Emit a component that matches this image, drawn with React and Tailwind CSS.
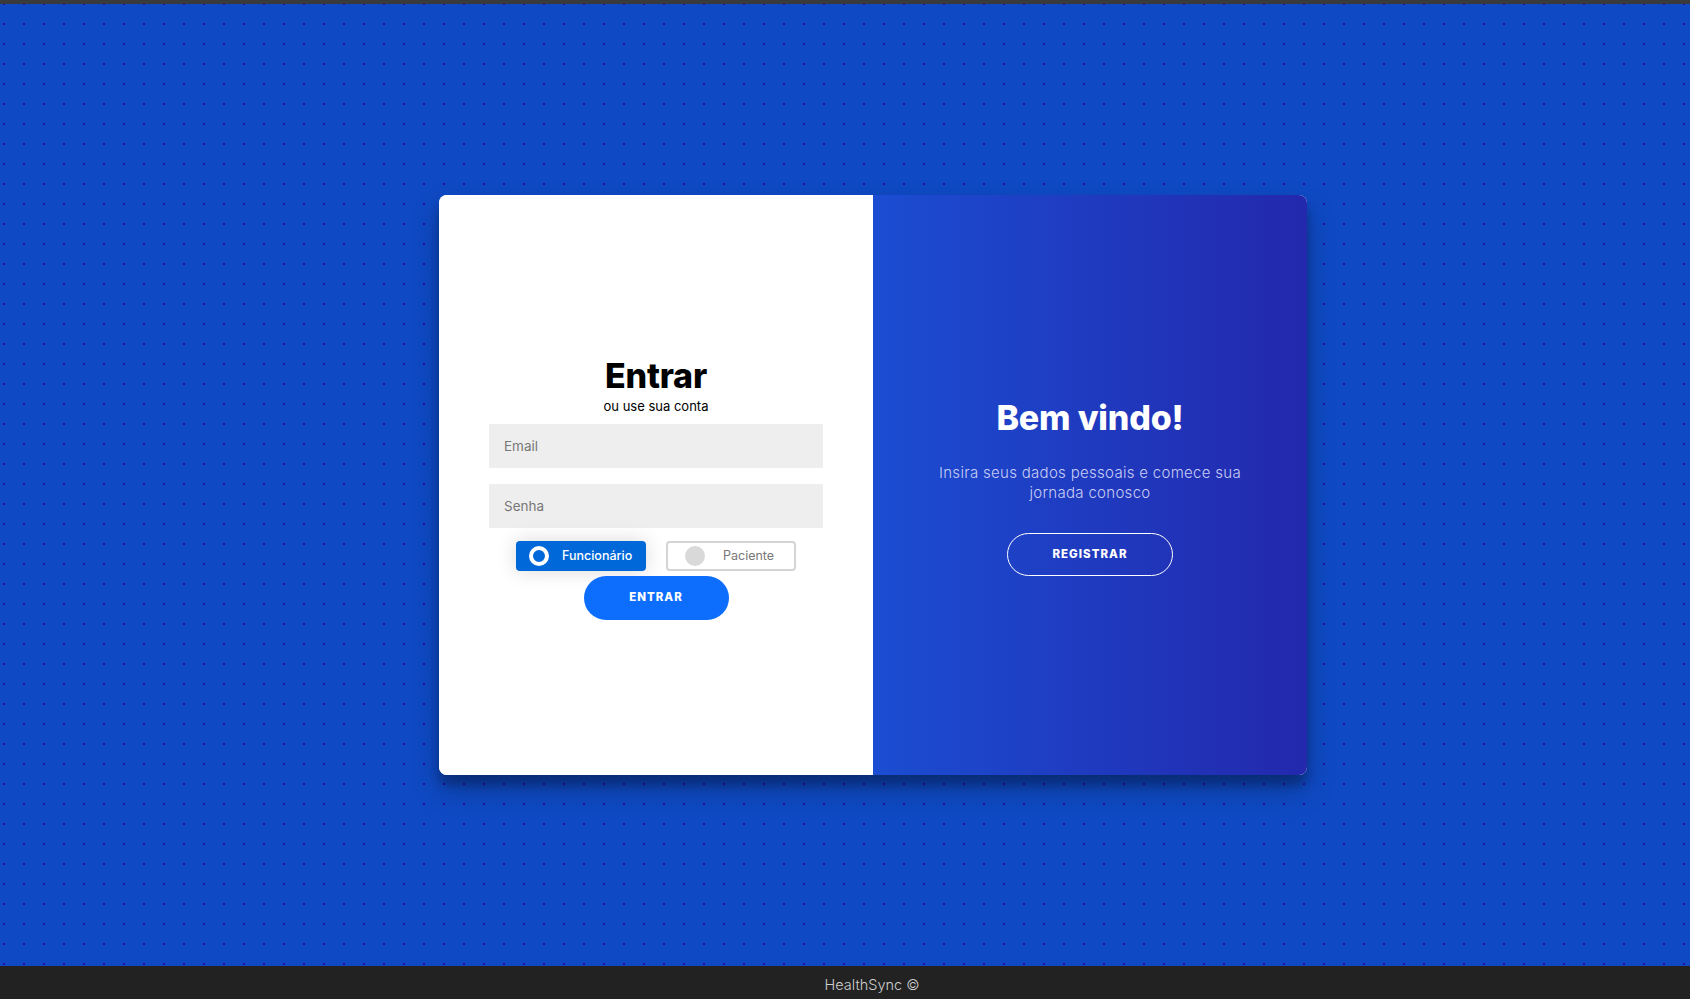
import React from "react";

export default function App() {
  return (
    <div className="w-[1690px] h-[999px] flex flex-col overflow-hidden font-['Inter',sans-serif]">
      <div className="h-[4px] bg-[#3a3a3a] shrink-0" />
      <main className="flex-1 flex items-center justify-center pl-[56px] bg-[#0f4ac4] bg-[radial-gradient(circle,#2a0ca2_1.1px,transparent_1.3px)] bg-[length:20px_20px] bg-[position:-6px_-10px]">
        <div className="w-[868px] h-[580px] flex rounded-[8px] overflow-hidden bg-white shadow-[0_14px_28px_rgba(0,0,0,0.25),0_10px_10px_rgba(0,0,0,0.22)]">
          <div className="w-[434px] shrink-0 bg-white flex flex-col items-center justify-center pt-[6px]">
            <h1 className="text-[34px] leading-[40px] font-extrabold text-black tracking-[-0.2px]">Entrar</h1>
            <p className="text-[13px] leading-[17px] text-black mt-[2px]">ou use sua conta</p>
            <div className="w-[334px] mt-[9px] flex flex-col gap-[16px]">
              <input
                placeholder="Email"
                className="h-[44px] w-full bg-[#eeeeee] px-[15px] text-[13.5px] text-[#333] placeholder:text-[#777] outline-none"
              />
              <input
                type="password"
                placeholder="Senha"
                className="h-[44px] w-full bg-[#eeeeee] px-[15px] text-[13.5px] text-[#333] placeholder:text-[#777] outline-none"
              />
            </div>
            <div className="flex gap-[20px] mt-[13px]">
              <div className="w-[130px] h-[30px] rounded-[4px] bg-[#0068d9] flex items-center pl-[13px] gap-[13px] shadow-[0_0_20px_rgba(0,0,0,0.15)]">
                <span className="w-[20px] h-[20px] rounded-full border-[4px] border-white bg-[#0068d9]" />
                <span className="text-[12.5px] font-medium text-white">Funcionário</span>
              </div>
              <div className="w-[130px] h-[30px] rounded-[4px] border-2 border-[#d4d4d4] bg-white flex items-center pl-[17px] gap-[18px]">
                <span className="w-[20px] h-[20px] rounded-full bg-[#d9d9d9]" />
                <span className="text-[12.5px] text-[#777]">Paciente</span>
              </div>
            </div>
            <button className="mt-[5px] w-[145px] h-[44px] rounded-full bg-[#0d6efd] text-white text-[11.5px] font-extrabold tracking-[1px]">
              ENTRAR
            </button>
          </div>
          <div className="flex-1 bg-[linear-gradient(to_right,#1b4dd2,#2328ad)] flex flex-col items-center justify-center pt-[4px]">
            <h2 className="text-[34px] leading-[40px] font-extrabold text-white tracking-[-0.2px]">Bem vindo!</h2>
            <p className="mt-[25px] w-[330px] text-center text-[15px] leading-[20px] font-light text-[#c9cdf4] tracking-[0.3px]">
              Insira seus dados pessoais e comece sua jornada conosco
            </p>
            <button className="mt-[30px] w-[166px] h-[43px] rounded-full border border-white text-white text-[11.5px] font-extrabold tracking-[1px]">
              REGISTRAR
            </button>
          </div>
        </div>
      </main>
      <footer className="h-[33px] shrink-0 bg-[#222222] flex items-center justify-center pl-[54px] pt-[4px]">
        <span className="text-[14.5px] font-light text-[#cfcfcf]">HealthSync ©</span>
      </footer>
    </div>
  );
}
